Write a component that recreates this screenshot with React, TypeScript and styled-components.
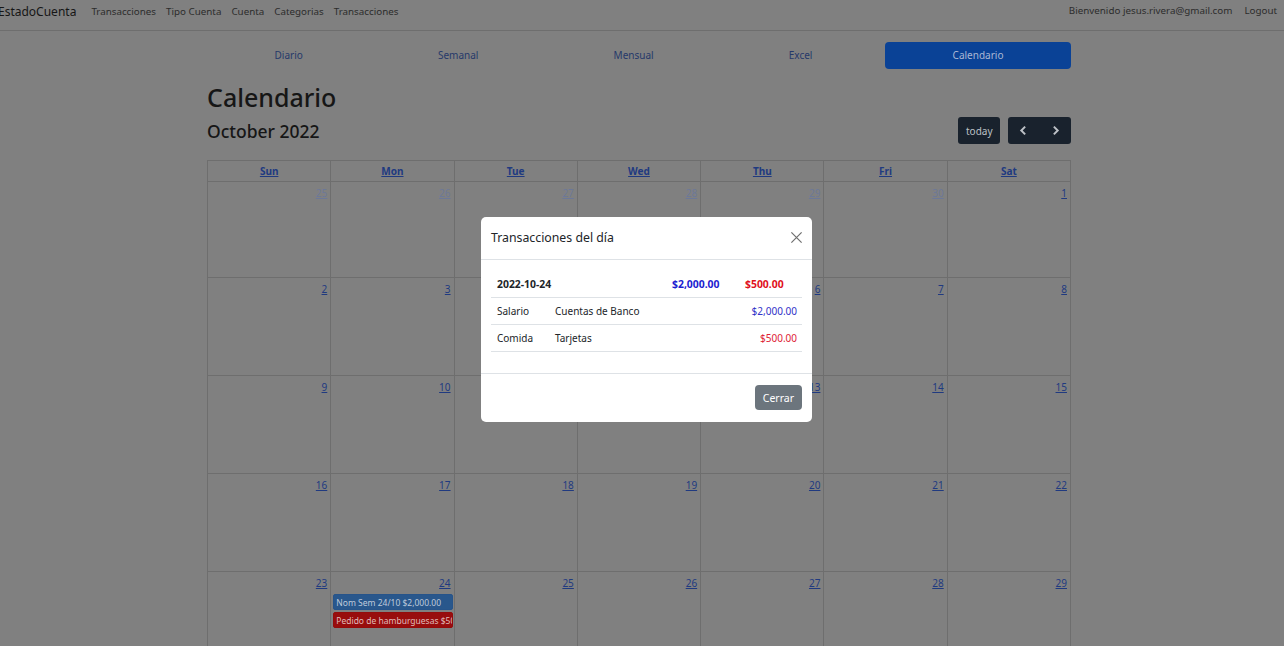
import React from "react";
import styled, { createGlobalStyle } from "styled-components";

interface CalDay {
    day: number,
    other: boolean,
}

interface CalEvent {
    title: string,
    kind: "income" | "expense",
}

const events: { [key: string]: CalEvent[] } = {
    "24": [
        { title: "Nom Sem 24/10 $2,000.00", kind: "income" },
        { title: "Pedido de hamburguesas $500.00", kind: "expense" },
    ],
};

const weekDays = ["Sun", "Mon", "Tue", "Wed", "Thu", "Fri", "Sat"];

// October 2022 starts on a Saturday
function buildMonth(): CalDay[] {
    let days: CalDay[] = [];
    for (let d = 25; d <= 30; d++) days.push({ day: d, other: true });
    for (let d = 1; d <= 31; d++) days.push({ day: d, other: false });
    let n = 1;
    while (days.length < 42) days.push({ day: n++, other: true });
    return days;
}

const navLinks = ["Transacciones", "Tipo Cuenta", "Cuenta", "Categorias", "Transacciones"];
const tabs = ["Diario", "Semanal", "Mensual", "Excel", "Calendario"];

export default function App() {
    let month = buildMonth();

    return (
        <>
            <GlobalStyle />
            <Navbar>
                <NavGroup>
                    <Brand>EstadoCuenta</Brand>
                    {navLinks.map((l, i) => <NavLink key={i}>{l}</NavLink>)}
                </NavGroup>
                <NavGroup>
                    <NavLink>Bienvenido jesus.rivera@gmail.com</NavLink>
                    <NavLink $spaced>Logout</NavLink>
                </NavGroup>
            </Navbar>

            <Container>
                <Tabs>
                    {tabs.map((t) => (
                        <Tab key={t} $active={t === "Calendario"}>{t}</Tab>
                    ))}
                </Tabs>

                <Title>Calendario</Title>

                <Toolbar>
                    <MonthTitle>October 2022</MonthTitle>
                    <ToolButtons>
                        <DarkButton>today</DarkButton>
                        <ButtonGroup>
                            <DarkButton $icon>
                                <Chevron viewBox="0 0 10 10"><path d="M6.5 1.5 3 5l3.5 3.5" /></Chevron>
                            </DarkButton>
                            <DarkButton $icon>
                                <Chevron viewBox="0 0 10 10"><path d="M3.5 1.5 7 5 3.5 8.5" /></Chevron>
                            </DarkButton>
                        </ButtonGroup>
                    </ToolButtons>
                </Toolbar>

                <CalendarGrid>
                    {weekDays.map((d) => <HeaderCell key={d}><span>{d}</span></HeaderCell>)}
                    {month.map((d, i) => (
                        <DayCell key={i}>
                            <DayNumber $other={d.other}>{d.day}</DayNumber>
                            {!d.other && events[String(d.day)]?.map((e, j) => (
                                <EventChip key={j} $kind={e.kind}>{e.title}</EventChip>
                            ))}
                        </DayCell>
                    ))}
                </CalendarGrid>
            </Container>

            <ModalLayer>
                <Modal>
                    <ModalHeader>
                        <ModalTitle>Transacciones del día</ModalTitle>
                        <CloseIcon viewBox="0 0 14 14"><path d="M1.5 1.5l11 11M12.5 1.5l-11 11" /></CloseIcon>
                    </ModalHeader>
                    <ModalBody>
                        <DayTable>
                            <colgroup>
                                <col style={{ width: 58 }} />
                                <col style={{ width: 117 }} />
                                <col style={{ width: 73 }} />
                                <col style={{ width: 63 }} />
                            </colgroup>
                            <tbody>
                                <tr>
                                    <Cell $bold colSpan={2}>2022-10-24</Cell>
                                    <Cell $bold $tone="income">$2,000.00</Cell>
                                    <Cell $bold $tone="expense">$500.00</Cell>
                                </tr>
                                <tr>
                                    <Cell>Salario</Cell>
                                    <Cell>Cuentas de Banco</Cell>
                                    <Cell $right $tone="income" colSpan={2}>$2,000.00</Cell>
                                </tr>
                                <tr>
                                    <Cell>Comida</Cell>
                                    <Cell>Tarjetas</Cell>
                                    <Cell $right $tone="expense" colSpan={2}>$500.00</Cell>
                                </tr>
                            </tbody>
                        </DayTable>
                    </ModalBody>
                    <ModalFooter>
                        <CloseButton>Cerrar</CloseButton>
                    </ModalFooter>
                </Modal>
            </ModalLayer>
        </>
    );
}

const GlobalStyle = createGlobalStyle`
  html, body {
    margin: 0;
    padding: 0;
    background: #808080;
  }
  body {
    font-family: "Noto Sans", "Open Sans", sans-serif;
    font-size: 10px;
    color: #121212;
    overflow: hidden;
  }
`;

const Navbar = styled.nav`
  height: 31px;
  box-sizing: border-box;
  border-bottom: 1px solid #6e6e6e;
  display: flex;
  justify-content: space-between;
  align-items: flex-start;
  padding: 3px 2px 0 0;
`;

const NavGroup = styled.div`
  display: flex;
  align-items: center;
`;

const Brand = styled.div`
  font-size: 12px;
  line-height: 17px;
  color: #161616;
  margin-left: -2px;
  margin-right: 10px;
`;

const NavLink = styled.div<{ $spaced?: boolean }>`
  font-size: 9.8px;
  line-height: 16px;
  color: #2c2c2c;
  padding: 0 5px;
  margin-left: ${(p) => (p.$spaced ? "2px" : "0")};
`;

const Container = styled.div`
  width: 864px;
  margin-left: 207px;
`;

const Tabs = styled.div`
  display: flex;
  height: 27px;
  margin-top: 11px;
`;

const Tab = styled.div<{ $active?: boolean }>`
  flex: 1 1 auto;
  text-align: center;
  line-height: 27px;
  padding: 0 13px;
  font-size: 10px;
  border-radius: 4px;
  color: ${(p) => (p.$active ? "#a9b7d4" : "#26396a")};
  background: ${(p) => (p.$active ? "#0a4296" : "transparent")};
  margin-left: ${(p) => (p.$active ? "5px" : "0")};
`;

const Title = styled.h1`
  margin: 12px 0 4px;
  font-size: 25px;
  line-height: 32px;
  font-weight: 500;
  color: #161616;
`;

const Toolbar = styled.div`
  display: flex;
  justify-content: space-between;
  align-items: center;
  height: 27px;
  margin-bottom: 16px;
`;

const MonthTitle = styled.h2`
  margin: 0;
  font-size: 17.5px;
  font-weight: 500;
  color: #161616;
`;

const ToolButtons = styled.div`
  display: flex;
  gap: 8px;
`;

const ButtonGroup = styled.div`
  display: flex;
`;

const DarkButton = styled.div<{ $icon?: boolean }>`
  height: 27px;
  box-sizing: border-box;
  display: flex;
  align-items: center;
  justify-content: center;
  background: #19222d;
  color: #bdc1c6;
  font-size: 10px;
  border-radius: 3px;
  padding: 0 ${(p) => (p.$icon ? "0" : "7.5px")};
  width: ${(p) => (p.$icon ? "31.5px" : "auto")};

  ${ButtonGroup} > &:first-child {
    border-top-right-radius: 0;
    border-bottom-right-radius: 0;
  }
  ${ButtonGroup} > &:last-child {
    border-top-left-radius: 0;
    border-bottom-left-radius: 0;
  }
`;

const Chevron = styled.svg`
  width: 11px;
  height: 11px;
  fill: none;
  stroke: #bdc1c6;
  stroke-width: 1.8;
`;

const CalendarGrid = styled.div`
  display: grid;
  grid-template-columns: repeat(7, 1fr);
  grid-template-rows: 21px 96px repeat(5, 98px);
  border-top: 1px solid #6e6e6e;
  border-left: 1px solid #6e6e6e;
`;

const HeaderCell = styled.div`
  border-right: 1px solid #6e6e6e;
  border-bottom: 1px solid #6e6e6e;
  text-align: center;
  line-height: 20px;
  font-size: 10px;
  font-weight: 700;
  color: #203a80;

  span {
    text-decoration: underline;
  }
`;

const DayCell = styled.div`
  border-right: 1px solid #6e6e6e;
  border-bottom: 1px solid #6e6e6e;
  display: flex;
  flex-direction: column;
  overflow: hidden;
`;

const DayNumber = styled.div<{ $other?: boolean }>`
  align-self: flex-end;
  padding: 4px 3px 4px;
  font-size: 10px;
  line-height: 14px;
  text-decoration: underline;
  color: ${(p) => (p.$other ? "#6c7898" : "#203a80")};
`;

const EventChip = styled.div<{ $kind: "income" | "expense" }>`
  margin: 0 1px 2px 2px;
  height: 16px;
  box-sizing: border-box;
  padding: 0 2px;
  font-size: 8.5px;
  line-height: 15px;
  white-space: nowrap;
  overflow: hidden;
  border-radius: 2px;
  border: 1px solid ${(p) => (p.$kind === "income" ? "#27548a" : "#930c0c")};
  background: ${(p) => (p.$kind === "income" ? "#29578c" : "#980d0d")};
  color: ${(p) => (p.$kind === "income" ? "#bfcadb" : "#e0bcbc")};
`;

const ModalLayer = styled.div`
  position: fixed;
  inset: 0;
  display: flex;
  align-items: center;
  justify-content: center;
  padding: 0 0 7px 9px;
`;

const Modal = styled.div`
  width: 331px;
  background: #fff;
  border-radius: 5px;
  color: #212529;
`;

const ModalHeader = styled.div`
  height: 43px;
  box-sizing: border-box;
  display: flex;
  align-items: center;
  justify-content: space-between;
  padding: 0 9px 0 10px;
  border-bottom: 1px solid #dee2e6;
`;

const ModalTitle = styled.div`
  font-size: 12.3px;
  color: #212529;
`;

const CloseIcon = styled.svg`
  width: 13px;
  height: 13px;
  fill: none;
  stroke: #6f6f6f;
  stroke-width: 1.3;
`;

const ModalBody = styled.div`
  padding: 11px 10px 21px;
`;

const DayTable = styled.table`
  width: 311px;
  table-layout: fixed;
  border-collapse: collapse;
`;

const Cell = styled.td<{ $bold?: boolean, $right?: boolean, $tone?: "income" | "expense" }>`
  height: 27px;
  box-sizing: border-box;
  padding: 0 5px 0 6px;
  border-bottom: 1px solid #dee2e6;
  font-size: ${(p) => (p.$bold ? "10.4px" : "10px")};
  white-space: nowrap;
  overflow: hidden;
  font-weight: ${(p) => (p.$bold ? 700 : 400)};
  text-align: ${(p) => (p.$right ? "right" : "left")};
  color: ${(p) =>
        p.$tone === "income" ? (p.$bold ? "#1d1dd0" : "#3232c8")
            : p.$tone === "expense" ? (p.$bold ? "#e0101c" : "#de2236")
                : "#212529"};
`;

const ModalFooter = styled.div`
  border-top: 1px solid #dee2e6;
  display: flex;
  justify-content: flex-end;
  padding: 11px 10px 12px;
`;

const CloseButton = styled.div`
  height: 25px;
  padding: 0 8px;
  display: flex;
  align-items: center;
  background: #6c757d;
  color: #fff;
  font-size: 10.5px;
  border-radius: 4px;
`;
